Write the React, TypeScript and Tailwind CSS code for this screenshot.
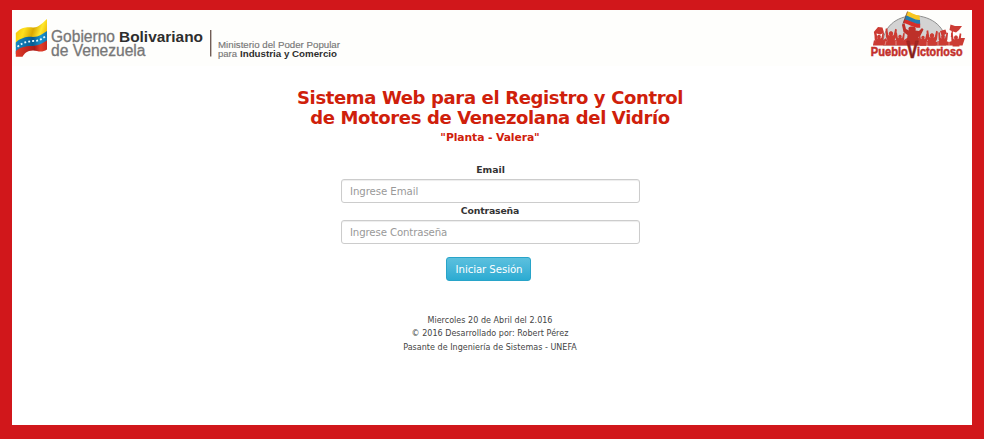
import React from "react";

const sans = "font-['DejaVu_Sans',Verdana,sans-serif]";

function GovernmentLogo() {
  return (
    <svg width="336" height="56" viewBox="12 10 336 56" fontFamily="'Liberation Sans', Arial, sans-serif">
      <defs>
        <linearGradient id="yellow" x1="0" x2="1" y1="0" y2="0.3">
          <stop offset="0" stopColor="#f3b900" />
          <stop offset="0.35" stopColor="#fde01c" />
          <stop offset="0.62" stopColor="#d9a800" />
          <stop offset="0.85" stopColor="#ffe92e" />
          <stop offset="1" stopColor="#f2c40c" />
        </linearGradient>
        <linearGradient id="blue" x1="0" x2="1">
          <stop offset="0" stopColor="#1688c4" />
          <stop offset="0.55" stopColor="#075c91" />
          <stop offset="0.8" stopColor="#1795d0" />
          <stop offset="1" stopColor="#1275af" />
        </linearGradient>
        <linearGradient id="red" x1="0" x2="1">
          <stop offset="0" stopColor="#e33a28" />
          <stop offset="0.6" stopColor="#a81b18" />
          <stop offset="0.8" stopColor="#e33e2a" />
          <stop offset="1" stopColor="#c52a1f" />
        </linearGradient>
      </defs>
      <path d="M15.8 33C22 26.5 28 27 33 27.5C38 28 43 22.5 47 19V34L34 46L15.8 47Z" fill="url(#yellow)" />
      <path d="M15.8 42.5C22 37 28 36.5 33 37C39 37 43 33.5 47 31V42L33 49L15.8 54Z" fill="url(#blue)" />
      <path d="M15.8 51C22 46 28 46 33 46C39 45.5 43 43 47 40.5V49.5C42 53 38 51 33 50.5C27 50.5 24 54 22.5 56.8H15.8Z" fill="url(#red)" />
      <path d="M17.5 46.8C23 42 28 41.5 33 41C39 41 42 39 45.8 36" fill="none" stroke="#e8faff" strokeWidth="1.8" strokeDasharray="1.9 2.1" />
      <text x="51" y="42" fontSize="15.6" fill="#777" textLength="64" lengthAdjust="spacingAndGlyphs" stroke="#777" strokeWidth="0.3">Gobierno</text>
      <text x="119" y="42" fontSize="15.4" fontWeight="700" fill="#2e2e2e" textLength="84" lengthAdjust="spacingAndGlyphs">Bolivariano</text>
      <text x="51" y="56" fontSize="15.6" fill="#777" textLength="94.5" lengthAdjust="spacingAndGlyphs" stroke="#777" strokeWidth="0.3">de Venezuela</text>
      <rect x="210" y="30" width="1.4" height="26.5" fill="#715d56" />
      <text x="218" y="48" fontSize="9.6" fill="#777" textLength="122" lengthAdjust="spacingAndGlyphs" stroke="#777" strokeWidth="0.15">Ministerio del Poder Popular</text>
      <text x="218" y="57" fontSize="9.6" fill="#777" textLength="19" lengthAdjust="spacingAndGlyphs" stroke="#777" strokeWidth="0.15">para</text>
      <text x="240" y="57" fontSize="9.6" fontWeight="700" fill="#2e2e2e" textLength="97" lengthAdjust="spacingAndGlyphs">Industria y Comercio</text>
    </svg>
  );
}

function CrowdFigure({ x, y, s = 1 }: { x: number; y: number; s?: number }) {
  return (
    <g transform={`translate(${x} ${y}) scale(${s})`}>
      <path d="M-5.2-5L-3.6-5.4L-2.6 1L-1.4 1.6C-2.8-.4-1.8-2.6 0-2.6S2.8-.4 1.4 1.6L2.6 1L4-5L5.6-4.4L4.8 3.2L3.6 5.5V9H-3.6V5.5L-4.8 2.8Z" />
    </g>
  );
}

function PuebloLogo() {
  return (
    <svg width="102" height="56" viewBox="866 10 102 56" fontFamily="'Liberation Sans', Arial, sans-serif">
      <defs>
        <linearGradient id="victory" x1="0" x2="0" y1="0" y2="1">
          <stop offset="0" stopColor="#bd2e29" />
          <stop offset="0.5" stopColor="#8e211d" />
          <stop offset="1" stopColor="#73201c" />
        </linearGradient>
      </defs>
      <path d="M883 45C882 28 896 15.8 914 15.8S947 28 946 45Z" fill="#d3d3d3" stroke="#8e8e8e" strokeWidth="1" />
      <g fill="#cc3b33">
        <path d="M873.8 32L878 27L882.5 27.5L884 32.5L880.5 34.5L876.5 33.5L877.5 38H876Z" />
        <path d="M950.5 24.5L955 26L962 26L959 30L956 32.5L953 31.5L952 37H950.8L951.7 31L949.5 30Z" />
        <path d="M940 31L945.5 29.5L946.8 34L941.5 35.5Z" />
        <CrowdFigure x={879} y={37} s={0.9} />
        <CrowdFigure x={891} y={34} s={1.05} />
        <CrowdFigure x={900} y={37} s={0.85} />
        <CrowdFigure x={923} y={38} s={0.85} />
        <CrowdFigure x={932} y={36} s={1.05} />
        <CrowdFigure x={943} y={37} s={0.9} />
        <CrowdFigure x={956} y={38} s={0.95} />
        <path d="M873 45L874 40L877 42L882 41L886 38L888 42L896 40L901 42L907 38H919L925 42L930 40L936 42L943 40L949 42L955 40L961 38L965 38L962.5 45.5H873Z" />
      </g>
      <path d="M885 45L886 41M896 45V41M927 45.5V42M938 45.5V42M949 45.5V42" fill="none" stroke="#f6d8d3" strokeWidth="0.5" />
      <path d="M902 25L904.5 23L906 29L909 30.5C907.5 28 909 26.5 912 26.5S916.5 28 915.5 30.5L919 31L922 28L923.5 29.5L920.5 35.5L918.5 37V44H906.5L907.5 35L903.5 32Z" fill="#bd3029" />
      <path d="M907.5 11.5C911 12 915 15.5 919.5 15.5L920 20.5C915 21 910 16.5 905.5 16Z" fill="#f8c623" />
      <path d="M905.7 15.5C910 16 915 20.5 920 20L920.2 24.5C915 25 909 20.5 904.2 19.8Z" fill="#257baf" />
      <path d="M904.4 19.2C909 20 915 24.2 920.2 23.8V27.8C915 28.5 908 24 903 22.8Z" fill="#d52f29" />
      <path d="M907.5 11.5L902.5 25" stroke="#76413a" strokeWidth="0.7" />
      <g fontWeight="700" fill="#c3302b" stroke="#c3302b" strokeWidth="0.5">
        <text x="870.8" y="56" fontSize="12" textLength="37" lengthAdjust="spacingAndGlyphs">Pueblo</text>
        <text x="917" y="56" fontSize="12" textLength="45.5" lengthAdjust="spacingAndGlyphs">ictorioso</text>
        <text x="906.3" y="58.4" fontSize="24" textLength="12" lengthAdjust="spacingAndGlyphs" fill="url(#victory)" stroke="#8e211d">V</text>
      </g>
    </svg>
  );
}

const field =
  "h-6 w-full rounded-[3px] border border-[#ccc] pr-2 pl-[8.5px] text-[10.2px] text-[#555] shadow-[inset_0_1px_1px_rgba(0,0,0,0.075)] placeholder:text-[#999]";

export default function App() {
  return (
    <div className={`h-[439px] w-[984px] overflow-hidden bg-[#d1171b] px-3 pt-[10px] pb-[14px] ${sans}`}>
      <main className="h-[415px] bg-white">
        <header className="flex h-14 justify-between bg-[#fefefc] pr-1">
          <GovernmentLogo />
          <PuebloLogo />
        </header>
        <div className="flex w-[956px] flex-col items-center">
          <h1 className="mt-[22px] text-center text-[18px] leading-[20px] font-bold tracking-[-0.36px] whitespace-nowrap text-[#cf200b]">
            Sistema Web para el Registro y Control
            <br />
            de Motores de Venezolana del Vidrío
          </h1>
          <h2 className="mt-[2px] text-[10.8px] leading-[16px] font-bold tracking-[-0.1px] text-[#cf200b]">"Planta - Valera"</h2>
          <form className="mt-[17px] flex w-[299px] flex-col items-center" onSubmit={(e) => e.preventDefault()}>
            <label htmlFor="email" className="h-[16px] pl-px text-[9.3px] leading-[14px] font-bold text-[#333]">Email</label>
            <input id="email" type="email" placeholder="Ingrese Email" className={`${field} tracking-[-0.08px]`} />
            <label htmlFor="password" className="h-[17px] text-[9.3px] leading-[15px] font-bold tracking-[-0.15px] text-[#333]">Contraseña</label>
            <input id="password" type="password" placeholder="Ingrese Contraseña" className={`${field} tracking-[-0.13px]`} />
            <button type="submit" className="mt-[13px] mr-[4px] h-6 w-[85px] rounded-[3px] border border-[#28a4c9] bg-linear-to-b from-[#5bc0de] to-[#2aabd2] pt-px pl-[2px] text-[10.2px] tracking-[-0.08px] whitespace-nowrap text-white">Iniciar Sesión</button>
          </form>
          <footer className="mt-[33px] text-center text-[8px] leading-[13.3px] tracking-[0.03px] text-[#444]">
            <p>Miercoles 20 de Abril del 2.016</p>
            <p>© 2016 Desarrollado por: Robert Pérez</p>
            <p>Pasante de Ingeniería de Sistemas - UNEFA</p>
          </footer>
        </div>
      </main>
    </div>
  );
}
